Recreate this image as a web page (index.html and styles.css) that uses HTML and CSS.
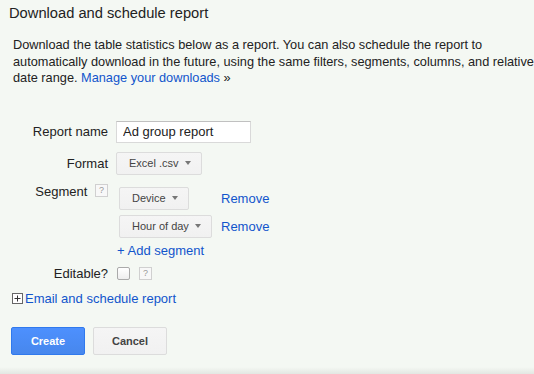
FILE: index.html
```html
<!DOCTYPE html>
<html lang="en">
<head>
    <meta charset="UTF-8">
    <title>Download and schedule report</title>
    <link rel="stylesheet" href="styles.css">
</head>
<body>

    <!-- Dialog header -->
    <h2 class="title">Download and schedule report</h2>

    <p class="intro">Download the table statistics below as a report. You can also schedule the report to automatically download in the future, using the same filters, segments, columns, and relative date range. <a href="#">Manage your downloads</a> &raquo;</p>

    <!-- Report options -->
    <div class="form">
        <div class="row">
            <label class="label" for="reportName">Report name</label>
            <input class="text-input" type="text" id="reportName" value="Ad group report">
        </div>

        <div class="row">
            <span class="label">Format</span>
            <button class="dropdown">Excel .csv <span class="arrow"></span></button>
        </div>

        <div class="row row-top">
            <span class="label">Segment <span class="help">?</span></span>
            <div class="segments">
                <button class="dropdown">Device <span class="arrow"></span></button>
                <a href="#" class="remove">Remove</a>
                <button class="dropdown">Hour of day <span class="arrow"></span></button>
                <a href="#" class="remove">Remove</a>
                <a href="#" class="add-segment">+ Add segment</a>
            </div>
        </div>

        <div class="row row-editable">
            <span class="label">Editable?</span>
            <span class="checkbox"></span>
            <span class="help help-editable">?</span>
        </div>
    </div>

    <div class="expander">
        <svg class="plus" width="11" height="11" viewBox="0 0 11 11">
            <rect x="0.5" y="0.5" width="10" height="10" fill="#fff" stroke="#666"/>
            <path d="M2.5 5.5h6M5.5 2.5v6" stroke="#333" stroke-width="1"/>
        </svg>
        <a href="#">Email and schedule report</a>
    </div>

    <!-- Actions -->
    <div class="actions">
        <button class="btn btn-primary">Create</button>
        <button class="btn">Cancel</button>
    </div>

    <div class="bottom-shade"></div>

</body>
</html>
```

FILE: styles.css
```css
/* General body styling */
body {
    font-family: "Liberation Sans", Arial, sans-serif;
    font-size: 13px;
    color: #222;
    margin: 0;
    padding: 0;
    background-color: #f4f8f3;
    overflow: hidden;
    height: 374px;
    position: relative;
}

a {
    color: #15c;
    text-decoration: none;
}

/* Header */
.title {
    font-size: 14.7px;
    font-weight: normal;
    line-height: 18px;
    margin: 0;
    padding: 4px 0 0 9px;
}

.intro {
    width: 540px;
    font-size: 12.75px;
    margin: 15px 0 0 13px;
    line-height: 16.5px;
}

/* Form rows */
.form {
    margin-top: 34px;
}

.row {
    display: flex;
    align-items: center;
    margin-bottom: 9px;
}

.row-top {
    align-items: flex-start;
}

.label {
    width: 108px;
    text-align: right;
    flex-shrink: 0;
    margin-right: 8px;
}

.text-input {
    width: 135px;
    height: 22px;
    box-sizing: border-box;
    border: 1px solid #d9d9d9;
    border-top-color: #c0c0c0;
    background: #fff;
    font-family: inherit;
    font-size: 13px;
    color: #222;
    padding: 0 6px;
    margin: 0;
}

.dropdown {
    display: inline-flex;
    align-items: center;
    height: 23px;
    box-sizing: border-box;
    padding: 0 10px 0 12px;
    border: 1px solid #dcdcdc;
    border-radius: 2px;
    background: linear-gradient(#f5f5f5, #f1f1f1);
    font-family: inherit;
    font-size: 11px;
    color: #444;
    margin: 0;
    cursor: pointer;
}

.arrow {
    display: inline-block;
    width: 0;
    height: 0;
    margin-left: 6px;
    border-left: 3.5px solid transparent;
    border-right: 3.5px solid transparent;
    border-top: 4px solid #777;
}

.help {
    display: inline-block;
    width: 11px;
    height: 11px;
    line-height: 11px;
    border: 1px solid #d0d0d0;
    background: #f8f8f8;
    color: #999;
    font-size: 9px;
    text-align: center;
    vertical-align: 3px;
    margin-left: 4px;
}

/* Segment list */
.segments {
    display: grid;
    grid-template-columns: 102px auto;
    row-gap: 5px;
    align-items: center;
    margin-left: 3px;
    margin-top: 3px;
}

.segments .dropdown {
    justify-self: start;
}

.add-segment {
    grid-column: 1 / 3;
    margin-left: -2px;
}

.row-editable {
    margin-top: -1px;
}

.checkbox {
    display: inline-block;
    width: 11px;
    height: 11px;
    border: 1px solid #aaa;
    border-radius: 2px;
    background: linear-gradient(#fff, #eee);
    margin-left: 1px;
}

.help-editable {
    margin-left: 9px;
    vertical-align: 0;
}

/* Expander link */
.expander {
    display: flex;
    align-items: center;
    margin: 10px 0 0 12px;
}

.plus {
    margin-right: 2px;
}

/* Action buttons */
.actions {
    display: flex;
    gap: 8px;
    margin: 21px 0 0 11px;
}

.btn {
    width: 74px;
    height: 28px;
    border: 1px solid #dcdcdc;
    border-radius: 2px;
    background: linear-gradient(#f5f5f5, #f1f1f1);
    color: #444;
    font-family: inherit;
    font-size: 11px;
    font-weight: bold;
    cursor: pointer;
    margin: 0;
}

.btn-primary {
    background: linear-gradient(#4d90fe, #4787ed);
    border-color: #3079ed;
    color: #fff;
}

.bottom-shade {
    position: absolute;
    left: 0;
    right: 0;
    bottom: 0;
    height: 7px;
    background: linear-gradient(rgba(0, 0, 0, 0), rgba(0, 0, 0, 0.07));
}
```
